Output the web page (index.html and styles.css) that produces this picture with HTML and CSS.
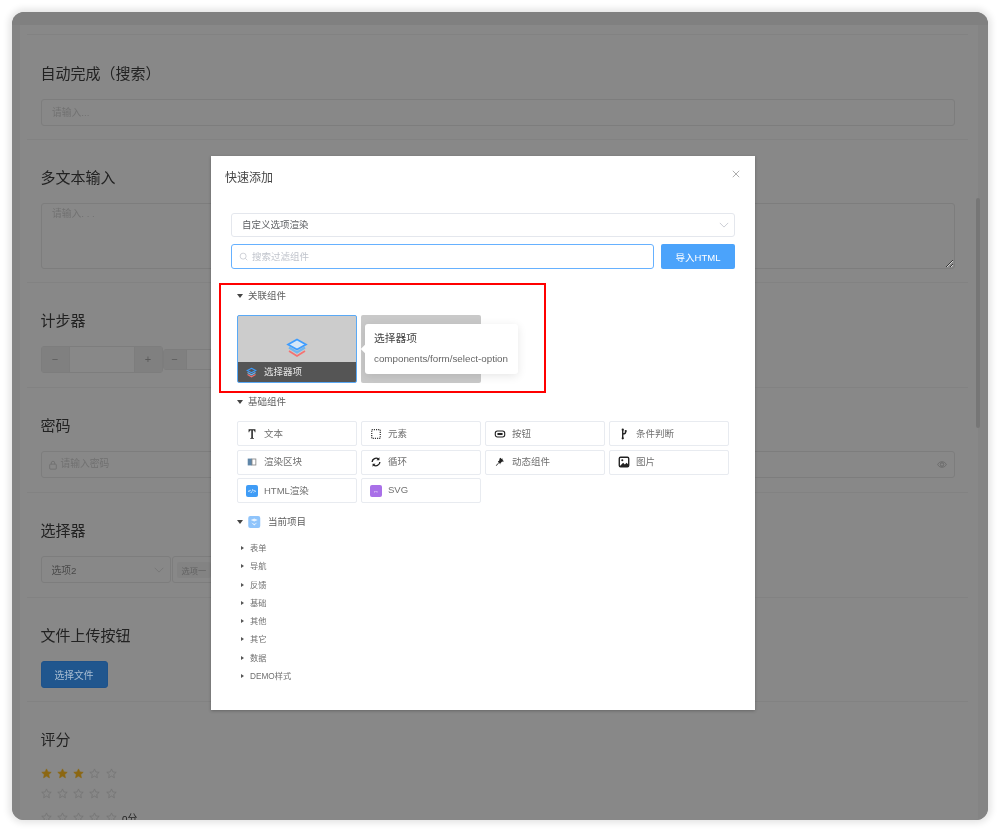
FILE: index.html
```html
<!DOCTYPE html>
<html lang="zh">
<head>
<meta charset="utf-8">
<title>快速添加</title>
<link rel="stylesheet" href="styles.css">
</head>
<body>
<svg class="defs" width="0" height="0"><symbol id="star" viewBox="0 0 24 24"><path d="M12 2l3 6.6 7.2.8-5.400 4.800 1.500 7.100L12 17.700 5.700 21.300l1.500-7.100L1.800 9.400 9 8.600z"/></symbol></svg>
<div class="window">
  <div class="topbar"></div>
  <div class="frame">
    <div class="sidebar"></div>
    <main class="page">
      <section class="block block-first"></section>
      <section class="block">
        <h2 class="block-title">自动完成（搜索）</h2>
        <input class="field" placeholder="请输入...">
      </section>
      <section class="block">
        <h2 class="block-title">多文本输入</h2>
        <textarea class="field area" placeholder="请输入. . ."></textarea>
      </section>
      <section class="block block-tall">
        <h2 class="block-title">计步器</h2>
        <div class="steppers">
          <div class="stepper"><span class="step">−</span><span class="step-value"></span><span class="step">+</span></div>
          <div class="stepper stepper-small"><span class="step">−</span><span class="step-value"></span><span class="step">+</span></div>
        </div>
      </section>
      <section class="block block-tall">
        <h2 class="block-title">密码</h2>
        <div class="field pass">
          <svg class="pass-icon" viewBox="0 0 12 12"><rect x="2" y="5" width="8" height="6" rx="1"/><path d="M4 5V3.500a2 2 0 0 1 4 0V5"/></svg>
          <span class="pass-text">请输入密码</span>
          <svg class="pass-eye" viewBox="0 0 14 12"><path d="M1 6c2-5 10-5 12 0-2 5-10 5-12 0z"/><circle cx="7" cy="6" r="2.400"/></svg>
        </div>
      </section>
      <section class="block block-tall">
        <h2 class="block-title">选择器</h2>
        <div class="selects">
          <div class="select-box"><span>选项2</span><svg class="chev" viewBox="0 0 12 7"><path d="M1 1l5 5 5-5"/></svg></div>
          <div class="select-box select-multi"><span class="tag">选项一</span></div>
        </div>
      </section>
      <section class="block">
        <h2 class="block-title">文件上传按钮</h2>
        <button class="upload">选择文件</button>
      </section>
      <section class="block block-last">
        <h2 class="block-title">评分</h2>
        <div class="stars stars-first">
          <svg class="star on"><use href="#star"/></svg>
          <svg class="star on"><use href="#star"/></svg>
          <svg class="star on"><use href="#star"/></svg>
          <svg class="star"><use href="#star"/></svg>
          <svg class="star"><use href="#star"/></svg>
        </div>
        <div class="stars">
          <svg class="star"><use href="#star"/></svg>
          <svg class="star"><use href="#star"/></svg>
          <svg class="star"><use href="#star"/></svg>
          <svg class="star"><use href="#star"/></svg>
          <svg class="star"><use href="#star"/></svg>
        </div>
        <div class="stars stars-third">
          <svg class="star"><use href="#star"/></svg>
          <svg class="star"><use href="#star"/></svg>
          <svg class="star"><use href="#star"/></svg>
          <svg class="star"><use href="#star"/></svg>
          <svg class="star"><use href="#star"/></svg>
          <span class="score">0分</span>
        </div>
      </section>
    </main>
    <div class="track"><div class="thumb"></div></div>
  </div>

  <div class="mask">
    <div class="modal">
      <header class="modal-head">
        <span class="modal-title">快速添加</span>
        <svg class="modal-close" viewBox="0 0 10 10"><path d="M1 1l8 8M9 1l-8 8"/></svg>
      </header>
      <div class="picker">
        <div class="picker-select"><span class="lift">自定义选项渲染</span><svg class="chev chev-light" viewBox="0 0 12 7"><path d="M1 1l5 5 5-5"/></svg></div>
        <div class="picker-row">
          <div class="picker-search">
            <svg class="search-icon" viewBox="0 0 12 12"><circle cx="5.500" cy="5.500" r="4"/><path d="M8.500 8.500l2.500 2.500"/></svg>
            <span class="lift">搜索过滤组件</span>
          </div>
          <button class="import">导入HTML</button>
        </div>
      </div>

      <div class="group-head group-first"><i class="caret"></i><span class="lift">关联组件</span></div>
      <div class="related">
        <div class="card card-active">
          <div class="card-preview">
            <svg class="layers" viewBox="0 0 22 20">
              <path class="l-red" d="M3 13l8 5 8-5"/>
              <path class="l-mid" d="M3 9.500l8 5 8-5"/>
              <path class="l-top" d="M11 1.500L20 6.500 11 11.500 2 6.500z"/>
            </svg>
          </div>
          <div class="card-label">
            <svg class="layers layers-small" viewBox="0 0 22 20">
              <path class="l-red" d="M3 14l8 4.500 8-4.500"/>
              <path class="l-mid" d="M3 10l8 4.500 8-4.500"/>
              <path class="l-top" d="M11 1.500L19.500 6 11 10.500 2.500 6z"/>
            </svg>
            <span class="lift">选择器项</span>
          </div>
        </div>
        <div class="card card-ghost"></div>
        <div class="tip">
          <i class="tip-arrow"></i>
          <div class="tip-title">选择器项</div>
          <div class="tip-path">components/form/select-option</div>
        </div>
      </div>

      <div class="group-head"><i class="caret"></i><span class="lift">基础组件</span></div>
      <div class="basics">
        <div class="item"><svg class="item-icon" viewBox="0 0 14 14"><path class="solid" d="M3 1.500h8v3.500h-.8c-.2-1.500-.7-2.300-1.900-2.300h-.3v8.300c0 .6.300.8 1.200.8v.8H5v-.8c.9 0 1.200-.2 1.200-.8V2.700h-.3C4.700 2.700 4.200 3.500 3.800 5H3z"/></svg><span class="lift">文本</span></div>
        <div class="item"><svg class="item-icon" viewBox="0 0 14 14"><rect class="dots" x="2" y="2" width="10" height="10"/></svg><span class="lift">元素</span></div>
        <div class="item"><svg class="item-icon" viewBox="0 0 14 14"><rect class="line" x="1.500" y="3.500" width="11" height="7" rx="2.500"/><rect class="solid" x="4" y="5.800" width="6" height="2.400"/></svg><span class="lift">按钮</span></div>
        <div class="item"><svg class="item-icon" viewBox="0 0 14 14"><path class="line line-bold" d="M5.500 1.500v11M5.500 7c2.500 0 3.500-.8 3.500-3"/><circle class="solid" cx="5.500" cy="2" r="1.300"/><circle class="solid" cx="9" cy="3.500" r="1.300"/><circle class="solid" cx="5.500" cy="12" r="1.300"/></svg><span class="lift">条件判断</span></div>
        <div class="item"><svg class="item-icon" viewBox="0 0 14 14"><rect class="blk-left" x="2" y="3" width="5" height="8"/><rect class="blk-right" x="7" y="3.500" width="4.500" height="7"/></svg><span class="lift">渲染区块</span></div>
        <div class="item"><svg class="item-icon" viewBox="0 0 14 14"><path class="line line-bold" d="M2.500 7a4.500 4.500 0 0 1 7.500-3.300M11.500 7A4.500 4.500 0 0 1 4 10.300"/><path class="solid" d="M11 1.500v3.500H7.500zM3 12.500V9h3.500z"/></svg><span class="lift">循环</span></div>
        <div class="item"><svg class="item-icon" viewBox="0 0 14 14"><path class="solid" d="M6.500 3l1-1 1.500 1.500 1.500-.7-.7 1.500 1.700 1.700-1 .7-1-.2-2 2-.3 1.500L6 8 3 11.500l-1-.5 3.500-3.500L4.500 6l1.500-.5z"/></svg><span class="lift">动态组件</span></div>
        <div class="item"><svg class="item-icon" viewBox="0 0 14 14"><rect class="line line-bold" x="1.500" y="1.500" width="11" height="11" rx="1.500"/><circle class="solid" cx="5" cy="5" r="1.200"/><path class="solid" d="M2 12l4-4 2 2 2-2 2.500 2.500V12z"/></svg><span class="lift">图片</span></div>
        <div class="item"><span class="badge badge-html">&lt;/&gt;</span><span class="lift">HTML渲染</span></div>
        <div class="item"><span class="badge badge-svg">↔</span><span class="lift">SVG</span></div>
      </div>

      <div class="group-head group-project">
        <i class="caret"></i>
        <svg class="project-icon" viewBox="0 0 12 12"><rect class="p-bg" width="12" height="12" rx="2"/><path class="p-fg" d="M2.500 4L6 2.500 9.500 4 6 5.500zM3 6.500l3 1.500 3-1.500L6 9.500z"/></svg>
        <span class="lift">当前项目</span>
      </div>
      <ul class="tree">
        <li><i class="caret-right"></i><span class="lift">表单</span></li>
        <li><i class="caret-right"></i><span class="lift">导航</span></li>
        <li><i class="caret-right"></i><span class="lift">反馈</span></li>
        <li><i class="caret-right"></i><span class="lift">基础</span></li>
        <li><i class="caret-right"></i><span class="lift">其他</span></li>
        <li><i class="caret-right"></i><span class="lift">其它</span></li>
        <li><i class="caret-right"></i><span class="lift">数据</span></li>
        <li><i class="caret-right"></i><span class="lift">DEMO样式</span></li>
      </ul>
    </div>
  </div>
  <div class="highlight"></div>
</div>
</body>
</html>
```
FILE: styles.css
```css
* { box-sizing: border-box; }
html, body { margin: 0; height: 100%; background: #fff; }
body {
  padding: 12px;
  font-family: "Liberation Sans", "Noto Sans CJK SC", sans-serif;
  overflow: hidden;
}
.defs { position: absolute; }
.window {
  position: relative;
  height: 808px;
  border-radius: 12px;
  overflow: hidden;
  background: #808080;
  display: flex;
  flex-direction: column;
}
body::before {
  content: "";
  position: fixed;
  left: 12px; top: 12px; width: 976px; height: 808px;
  border-radius: 12px;
  box-shadow: 0 0 7px 3px rgba(0,0,0,.11);
}
.topbar { height: 13px; flex: none; background: #808080; }
.frame { flex: 1; display: flex; min-height: 0; }
.sidebar { width: 8px; flex: none; background: #848484; }
.page {
  flex: 1;
  background: #888;
  padding: 0 10px 0 7px;
  overflow: hidden;
  min-width: 0;
}
.track { width: 10px; flex: none; background: #848484; position: relative; }
.thumb {
  position: absolute;
  left: -2px; top: 173px;
  width: 4px; height: 230px;
  border-radius: 2px;
  background: #767676;
}
.block {
  border-bottom: 1px solid #828282;
  padding: 0 13px 13px 13.500px;
}
.block-tall { padding-bottom: 14px; }
.block-first { height: 9.500px; padding: 0; margin-bottom: 1.500px; }
.block-last { border-bottom: 0; }
.block-title {
  margin: 0;
  padding-top: 27px;
  height: 63px;
  font-size: 15px;
  line-height: 22px;
  font-weight: 400;
  color: #222;
}
.field {
  display: block;
  width: 100%;
  height: 27px;
  border: 1px solid #7d7d7d;
  border-radius: 3px;
  background: transparent;
  padding: 0 10.500px;
  font: 9.750px/25px "Liberation Sans", "Noto Sans CJK SC", sans-serif;
  color: #6e6e6e;
  outline: none;
}
.field::placeholder { color: #717171; opacity: 1; }
.area { height: 66px; padding-top: 3px; line-height: 14px; }
.steppers { display: flex; align-items: center; height: 27px; }
.stepper {
  display: flex;
  width: 122px;
  height: 27px;
  border: 1px solid #7d7d7d;
  border-radius: 3px;
  flex: none;
}
.step {
  width: 27px;
  flex: none;
  background: #808080;
  color: #5a5a5a;
  font-size: 11px;
  line-height: 25px;
  text-align: center;
}
.step-value { flex: 1; border-left: 1px solid #7d7d7d; border-right: 1px solid #7d7d7d; }
.stepper-small { height: 21px; }
.stepper-small .step { width: 22px; line-height: 19px; }
.pass { display: flex; align-items: center; padding: 0 5px 0 6px; }
.pass-icon { width: 10px; height: 10px; fill: none; stroke: #6f6f6f; stroke-width: 1; margin-right: 3px; }
.pass-text { flex: 1; color: #717171; margin-bottom: 2px; }
.pass-eye { width: 10px; height: 9px; fill: none; stroke: #6a6a6a; stroke-width: 1.400; margin-right: 2px; }
.selects { display: flex; gap: 1px; height: 27px; }
.select-box {
  width: 130px;
  height: 27px;
  border: 1px solid #7d7d7d;
  border-radius: 3px;
  display: flex;
  align-items: center;
  justify-content: space-between;
  padding: 0 6px 0 10px;
  font-size: 9.750px;
  color: #4a4a4a;
}
.select-multi { padding-left: 4px; justify-content: flex-start; width: 200px; }
.tag { background: #838383; padding: 2px 5px; border-radius: 2px; font-size: 8.250px; color: #626262; }
.chev { width: 10px; height: 6px; fill: none; stroke: #767676; stroke-width: 1; }
.upload {
  display: block;
  width: 67px;
  height: 27px;
  border: 1px solid #1e528a;
  border-radius: 3px;
  background: #20568e;
  color: #a8bdd2;
  font: 9.750px "Liberation Sans", "Noto Sans CJK SC", sans-serif;
  padding: 0;
}
.stars { display: flex; gap: 5.300px; height: 11px; align-items: center; margin-bottom: 9px; }
.stars-first { margin-top: 2.500px; }
.stars-third { margin-top: 13.500px; }
.star { width: 11px; height: 11px; flex: none; fill: none; stroke: #717171; stroke-width: 1.500; }
.star.on { fill: #8c6712; stroke: #8c6712; }
.score { font-size: 9.750px; color: #222; margin-left: 0; }

.mask {
  position: absolute;
  inset: 0;
  padding: 144px 0 0 199px;
}
.modal {
  width: 544px;
  height: 554px;
  background: #fff;
  box-shadow: 0 1px 3px rgba(0,0,0,.25);
  font-size: 9.500px;
  color: #606060;
}
.lift { margin-bottom: 2px; }
.modal-head {
  height: 43px;
  padding: 0 14px 2px;
  display: flex;
  align-items: center;
  justify-content: space-between;
}
.modal-title { font-size: 12px; color: #444; }
.modal-close { width: 8px; height: 8px; fill: none; stroke: #999; stroke-width: 1; margin: -5px 0 0; position: relative; left: -1px; }
.picker { margin: 14px 20px 0; display: flex; flex-direction: column; gap: 7px; }
.picker-select {
  height: 24px;
  border: 1px solid #e4e7ed;
  border-radius: 3px;
  padding: 0 5px 0 10px;
  display: flex;
  align-items: center;
  justify-content: space-between;
  color: #606266;
  font-size: 9.500px;
}
.chev-light { stroke: #c0c4cc; }
.picker-row { display: flex; gap: 7px; height: 25px; }
.picker-search {
  flex: 1;
  border: 1px solid #66b1ff;
  border-radius: 3px;
  display: flex;
  align-items: center;
  padding: 0 7px;
  gap: 4px;
  color: #c0c4cc;
}
.search-icon { width: 9px; height: 9px; fill: none; stroke: #c0c4cc; stroke-width: 1; flex: none; }
.import {
  width: 74px;
  border: 0;
  border-radius: 2px;
  background: #4ba3fb;
  color: #fff;
  font: 9.500px "Liberation Sans", "Noto Sans CJK SC", sans-serif;
  padding: 0;
}
.group-head {
  height: 14px;
  margin: 12px 0 12px 26px;
  display: flex;
  align-items: center;
  gap: 5px;
  color: #606060;
}
.group-first { margin-top: 20px; }
.group-project { margin-bottom: 10px; gap: 5px; }
.group-project span { margin-left: 2.500px; }
.caret {
  width: 0; height: 0;
  border-left: 3.500px solid transparent;
  border-right: 3.500px solid transparent;
  border-top: 4px solid #444;
  flex: none;
}
.project-icon { width: 12.500px; height: 12px; }
.p-bg { fill: #8fc4fb; }
.p-fg { fill: #e8f3fe; }
.related {
  position: relative;
  display: flex;
  gap: 4px;
  margin-left: 26px;
  height: 68px;
}
.card { width: 120px; height: 68px; flex: none; }
.card-active {
  display: flex;
  flex-direction: column;
  border: 1px solid #5aa9f5;
  border-radius: 2px;
  background: #ccc;
  overflow: hidden;
}
.card-preview { flex: 1; display: flex; align-items: center; justify-content: center; padding-top: 17px; }
.card-label {
  height: 20px;
  flex: none;
  background: #555;
  color: #e6e6e6;
  display: flex;
  align-items: center;
  gap: 7px;
  padding-left: 8px;
}
.card-ghost { background: #c9c9c9; border-radius: 2px; }
.layers { width: 22px; height: 20px; fill: none; stroke-width: 1.700; }
.layers-small { width: 11px; height: 11px; stroke-width: 2.200; }
.l-top { stroke: #3d9cff; fill: #d4e6f8; }
.layers-small .l-top { fill: #555; }
.l-mid { stroke: #6fb6f0; stroke-width: 2.200; }
.l-red { stroke: #f47272; }
.tip {
  position: absolute;
  left: 128px; top: 9px;
  width: 153px; height: 50px;
  background: #fff;
  border-radius: 3px;
  box-shadow: 0 2px 10px rgba(0,0,0,.1);
  padding: 7px 9px;
}
.tip-arrow {
  position: absolute;
  left: -3px; top: 22px;
  width: 6px; height: 6px;
  background: #fff;
  transform: rotate(45deg);
}
.tip-title { font-size: 10.750px; line-height: 15px; color: #444; }
.tip-path { font-size: 9.800px; line-height: 14px; margin-top: 6px; color: #666; white-space: nowrap; }
.basics {
  display: grid;
  grid-template-columns: repeat(4, 120px);
  grid-auto-rows: 25px;
  column-gap: 4px;
  row-gap: 3.500px;
  margin-left: 26px;
}
.item {
  border: 1px solid #e8ebf0;
  border-radius: 2px;
  display: flex;
  align-items: center;
  padding-left: 8px;
  gap: 6px;
  color: #707070;
}
.item-icon, .badge { width: 12px; height: 12px; flex: none; }
.solid { fill: #222; }
.line { fill: none; stroke: #222; stroke-width: 1.300; }
.line-bold { stroke-width: 1.600; }
.dots { fill: none; stroke: #333; stroke-width: 1.500; stroke-dasharray: 1.300 1.200; }
.blk-left { fill: #5f86a8; }
.blk-right { fill: none; stroke: #888; stroke-width: 1; }
.badge {
  border-radius: 2px;
  color: #fff;
  font-size: 6px;
  line-height: 12px;
  text-align: center;
  overflow: hidden;
}
.badge-html { background: #3f9cf6; }
.badge-svg { background: #a970e8; }
.tree { list-style: none; margin: 0 0 0 30px; padding: 0; }
.tree li {
  height: 18.250px;
  display: flex;
  align-items: center;
  gap: 6px;
  font-size: 8.250px;
  color: #707070;
}
.caret-right {
  width: 0; height: 0;
  border-top: 2.500px solid transparent;
  border-bottom: 2.500px solid transparent;
  border-left: 3.500px solid #555;
  flex: none;
}
.highlight {
  position: absolute;
  left: 207px; top: 271px;
  width: 327px; height: 110px;
  border: 2px solid #f00;
}
```
